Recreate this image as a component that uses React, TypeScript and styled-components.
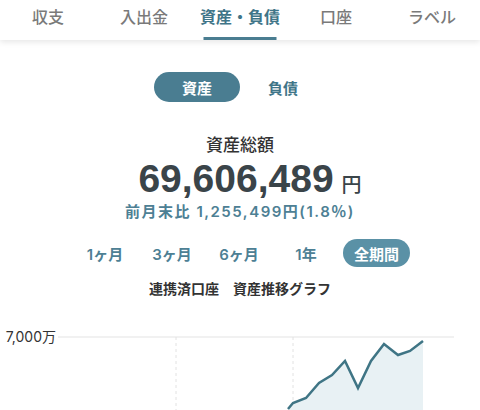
import styled, { createGlobalStyle } from 'styled-components';

const GlobalStyle = createGlobalStyle`
  html, body {
    margin: 0;
    padding: 0;
    background: #fff;
    overflow: hidden;
  }
  body {
    font-family: "Noto Sans CJK JP", "Noto Sans", sans-serif;
    color: #333;
  }
`;

const tabs = ['収支', '入出金', '資産・負債', '口座', 'ラベル'];
const periods = ['1ヶ月', '3ヶ月', '6ヶ月', '1年', '全期間'];

const points: [number, number][] = [
    [288, 85], [293, 79], [306, 74], [319, 59], [332, 51], [345, 37],
    [358, 64], [371, 37], [384, 20], [398, 31], [410, 27], [423, 17],
];

export default function App(): JSX.Element {
    const line = points.map(([x, y], i) => `${i === 0 ? 'M' : 'L'}${x} ${y}`).join(' ');
    const area = `${line} L423 100 L280 100 Z`;

    return (
        <Page>
            <GlobalStyle/>
            <TabBar>
                {tabs.map((t, i) => (
                    <Tab key={t} $active={i === 2}>{t}</Tab>
                ))}
            </TabBar>

            <Segment>
                <SegmentButton $active>資産</SegmentButton>
                <SegmentButton>負債</SegmentButton>
            </Segment>

            <Summary>
                <SummaryTitle>資産総額</SummaryTitle>
                <Total>
                    <TotalNumber>69,606,489</TotalNumber>
                    <TotalUnit>円</TotalUnit>
                </Total>
                <Diff>前月末比 1,255,499円(1.8％)</Diff>
            </Summary>

            <PeriodRow>
                {periods.map((p, i) => (
                    <PeriodButton key={p} $active={i === 4}>{p}</PeriodButton>
                ))}
            </PeriodRow>

            <GraphTitle>連携済口座　資産推移グラフ</GraphTitle>

            <Chart>
                <AxisLabel>7,000万</AxisLabel>
                <svg width="480" height="100" viewBox="0 0 480 100">
                    <line x1="58" y1="13" x2="454" y2="13" stroke="#ececec" strokeWidth="1.5"/>
                    <line x1="176" y1="13" x2="176" y2="100" stroke="#e2e2e2" strokeWidth="1" strokeDasharray="3 3"/>
                    <line x1="293" y1="13" x2="293" y2="100" stroke="#e2e2e2" strokeWidth="1" strokeDasharray="3 3"/>
                    <path d={area} fill="#e8f1f4"/>
                    <path d={line} fill="none" stroke="#3f7585" strokeWidth="2.5" strokeLinejoin="miter"/>
                </svg>
            </Chart>
        </Page>
    );
}

const Page = styled.div`
  width: 480px;
  height: 410px;
  display: flex;
  flex-direction: column;
  align-items: center;
  overflow: hidden;

  & > * {
    flex-shrink: 0;
  }
`;

const TabBar = styled.div`
  align-self: stretch;
  height: 40px;
  display: flex;
  background: #fff;
  box-shadow: 0 2px 6px rgba(0, 0, 0, 0.1);
  position: relative;
  z-index: 1;
`;

const Tab = styled.div<{ $active?: boolean }>`
  flex: 1;
  display: flex;
  align-items: center;
  justify-content: center;
  position: relative;
  font-size: 16px;
  font-weight: ${p => (p.$active ? 700 : 500)};
  color: ${p => (p.$active ? '#3f7588' : '#7a7a7a')};
  padding-bottom: 9px;

  &::after {
    content: '';
    display: ${p => (p.$active ? 'block' : 'none')};
    position: absolute;
    left: 50%;
    transform: translateX(-50%);
    width: 73px;
    bottom: 0;
    height: 3px;
    background: #4a7d91;
  }
`;

const Segment = styled.div`
  display: flex;
  margin-top: 32px;
`;

const SegmentButton = styled.div<{ $active?: boolean }>`
  width: 86px;
  height: 30px;
  border-radius: 15px;
  display: flex;
  align-items: center;
  justify-content: center;
  font-size: 15px;
  font-weight: 700;
  background: ${p => (p.$active ? '#4a7d91' : 'transparent')};
  color: ${p => (p.$active ? '#fff' : '#3f7588')};
`;

const Summary = styled.div`
  margin-top: 30px;
  display: flex;
  flex-direction: column;
  align-items: center;
`;

const SummaryTitle = styled.div`
  font-size: 17px;
  font-weight: 500;
  line-height: 24px;
  color: #333;
`;

const Total = styled.div`
  display: flex;
  align-items: baseline;
  gap: 8px;
  height: 44px;
  margin-top: 1px;
  padding-left: 20px;
  color: #3a4449;
`;

const TotalNumber = styled.span`
  font-family: "Liberation Sans", Arial, sans-serif;
  font-size: 39px;
  font-weight: 700;
  line-height: 44px;
`;

const TotalUnit = styled.span`
  font-size: 20px;
  font-weight: 500;
`;

const Diff = styled.div`
  margin-top: 1px;
  font-family: Inter, "Noto Sans CJK JP", sans-serif;
  font-size: 15px;
  line-height: 20px;
  font-weight: 600;
  letter-spacing: 1.5px;
  color: #4d8094;
`;

const PeriodRow = styled.div`
  margin-top: 17px;
  display: flex;
  align-items: center;
  gap: 7px;
  padding-left: 5px;
`;

const PeriodButton = styled.div<{ $active?: boolean }>`
  width: ${p => (p.$active ? '67px' : '60px')};
  height: 28px;
  border-radius: 14px;
  display: flex;
  align-items: center;
  justify-content: center;
  font-family: Inter, "Noto Sans CJK JP", sans-serif;
  font-size: 15px;
  font-weight: 600;
  background: ${p => (p.$active ? '#5a91a6' : 'transparent')};
  color: ${p => (p.$active ? '#fff' : '#4d8094')};
`;

const GraphTitle = styled.div`
  margin-top: 11px;
  font-size: 14px;
  font-weight: 700;
  line-height: 20px;
  color: #333;
`;

const Chart = styled.div`
  align-self: stretch;
  margin-top: 26px;
  position: relative;
  height: 100px;
`;

const AxisLabel = styled.span`
  position: absolute;
  right: 424px;
  top: 3px;
  font-family: Inter, "Noto Sans CJK JP", sans-serif;
  font-size: 14px;
  line-height: 20px;
  color: #333;
  white-space: nowrap;
`;
